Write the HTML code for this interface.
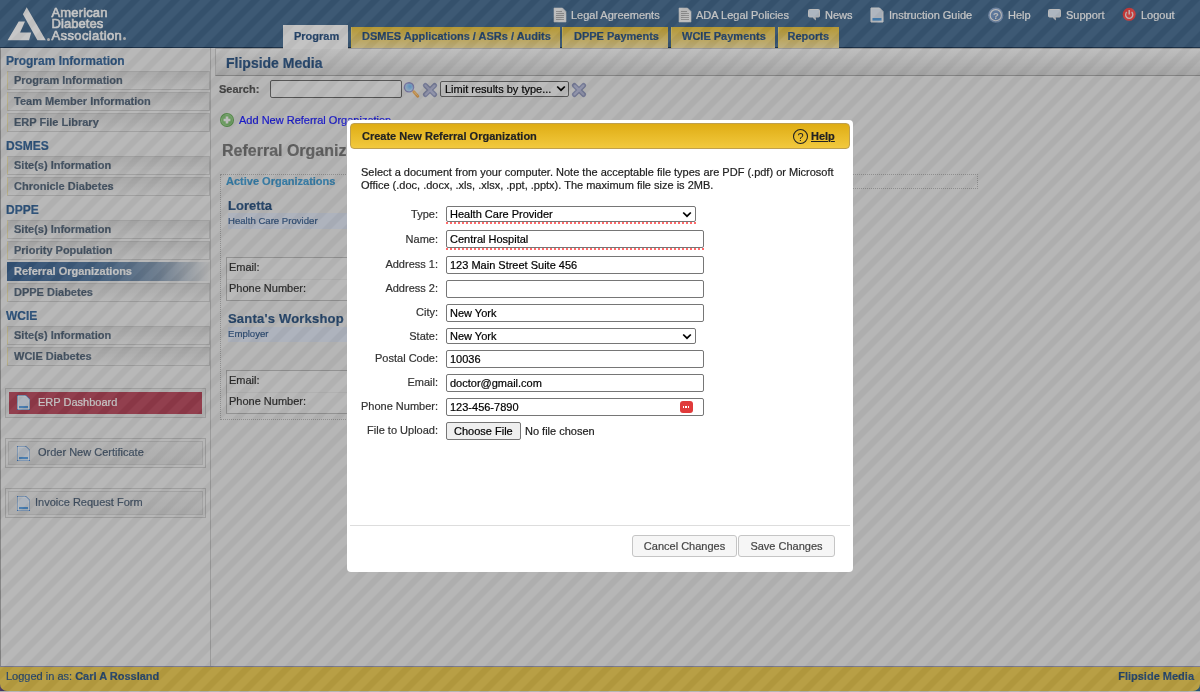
<!DOCTYPE html>
<html><head><meta charset="utf-8">
<style>
*{box-sizing:border-box;margin:0;padding:0}
html,body{width:1200px;height:692px;overflow:hidden}
body{font-family:"Liberation Sans",sans-serif;font-size:11px;background:#e8e8e8;position:relative;color:#333}
.abs{position:absolute}
.t{position:absolute;white-space:nowrap;line-height:1}
/* header */
#hdr{position:absolute;left:0;top:0;width:1200px;height:48px;background:#476c90;border-bottom:1px solid #1e3a58}
.nav{position:absolute;top:10px;color:#fff;font-size:11px;white-space:nowrap;line-height:11px}
.tab{position:absolute;top:27px;height:21px;background:linear-gradient(#e9c23e,#f3e0a0);border-left:1px solid #f7dc6e;color:#2d5585;font-weight:bold;font-size:11px;white-space:nowrap;line-height:11px;padding-top:4px}
/* sidebar */
#side{position:absolute;left:0;top:48px;width:211px;height:618px;background:#ebebeb;border-left:1px solid #a8a8a8;border-right:1px solid #c4c4c4}
.sh{position:absolute;left:5px;font-size:12px;font-weight:bold;color:#376699;line-height:12px;white-space:nowrap}
.si{position:absolute;left:6px;width:203px;height:19px;border:1px solid #cbcbcb;border-left:1px solid #eadfae;background:linear-gradient(#d8d8d8,#ebebeb);font-weight:bold;color:#55677b;font-size:11px;line-height:11px;padding:3px 0 0 6px;white-space:nowrap}
.si.act{background:linear-gradient(90deg,#3f6795 0%,#54789f 45%,#8ea2b8 76%,#e6e6e6 100%);background-origin:border-box;color:#fafafa;border-color:transparent}
/* main */
#title{position:absolute;left:215px;top:48px;width:985px;height:28px;background:linear-gradient(#f4f4f4,#d4d4d4);border-left:1px solid #c8c8c8;border-top:1px solid #c4c4c4;border-bottom:1px solid #a6a6a6}
#foot{position:absolute;left:0;top:666px;width:1200px;height:25px;background:#ebca52;border-top:1px solid #9a9ab4;border-radius:0 0 7px 7px}
#ov{position:absolute;left:0;top:0;width:1200px;height:692px;opacity:.25;z-index:10}
/* modal */
#modal{position:absolute;z-index:11;left:347px;top:120px;width:506px;height:452px;background:#fff;border-radius:4px}
#mt{position:absolute;left:3px;top:3px;width:500px;height:26px;border:1px solid #bfa050;border-radius:4px;background:linear-gradient(#dfad15,#f2c93e)}
.lbl{position:absolute;right:415px;font-size:11px;color:#333;white-space:nowrap;line-height:11px}
.inp{position:absolute;left:99px;width:258px;height:18px;border:1px solid #767676;border-radius:2px;background:#fff;font-size:11px;color:#000;line-height:11px;padding:3px 0 0 3px;white-space:nowrap}
.sel{width:250px;height:16px;padding-top:2px}
.dots{position:absolute;left:99px;height:2px;background:repeating-linear-gradient(90deg,#ff6a6a 0 2px,transparent 2px 4px)}
.btn{position:absolute;top:415px;height:22px;border:1px solid #c5c5c5;border-radius:3px;background:#f6f6f6;color:#454545;font-size:11px;line-height:11px;padding-top:5px;text-align:center;white-space:nowrap}
</style></head><body><div style="position:absolute;left:0;top:0;width:1200px;height:692px;will-change:transform;-webkit-text-stroke-width:0.2px">

<!-- HEADER -->
<div id="hdr">
  <svg class="abs" style="left:0;top:0" width="48" height="48" viewBox="0 0 48 48">
    <polygon fill="#fff" points="26.7,7.3 22.9,14.2 37.4,40.2 45.8,40.2"/>
    <polygon fill="#fff" points="7.6,40.2 18.7,21.5 25,21.5 20.1,32.6 31.2,32.6 29.1,40.2"/>
  </svg>
  <div class="t" style="left:51.5px;top:6.5px;color:#fff;font-weight:normal;font-size:13px;line-height:11.7px;-webkit-text-stroke:0.6px #fff"><span style="letter-spacing:.15px">American</span><br><span style="letter-spacing:.05px">Diabetes</span><br><span style="letter-spacing:.38px">Association</span></div>
  <div class="abs" style="left:47px;top:37.5px;width:3px;height:3px;border-radius:50%;background:#d8d8d8"></div>
  <div class="abs" style="left:122.5px;top:37px;width:3px;height:3px;border-radius:50%;background:#d8d8d8"></div>


  <svg class="abs" style="left:553px;top:7px" width="14" height="16" viewBox="0 0 14 16">
    <path d="M1 1 H9.5 L13 4.5 V15 H1 Z" fill="#f4f4f4" stroke="#e8e8e8" stroke-width="0.6"/>
    <path d="M3 4.5 H9 M3 6.5 H11 M3 8.5 H11 M3 10.5 H11 M3 12.5 H11" stroke="#b4b4b4" stroke-width="1"/>
  </svg>
  <svg class="abs" style="left:678px;top:7px" width="14" height="16" viewBox="0 0 14 16">
    <path d="M1 1 H9.5 L13 4.5 V15 H1 Z" fill="#f4f4f4" stroke="#e8e8e8" stroke-width="0.6"/>
    <path d="M3 4.5 H9 M3 6.5 H11 M3 8.5 H11 M3 10.5 H11 M3 12.5 H11" stroke="#b4b4b4" stroke-width="1"/>
  </svg>
  <svg class="abs" style="left:807px;top:8px" width="14" height="13" viewBox="0 0 14 13">
    <path d="M2.5 1.5 H11.5 Q12.5 1.5 12.5 2.5 V8 Q12.5 9 11.5 9 H8 L8.5 11.8 L5.5 9 H2.5 Q1.5 9 1.5 8 V2.5 Q1.5 1.5 2.5 1.5 Z" fill="#dde8f6" stroke="#f0f0f0" stroke-width="1"/>
  </svg>
  <svg class="abs" style="left:870px;top:7px" width="14" height="16" viewBox="0 0 14 16">
    <path d="M1 1 H9.5 L13 4.5 V15 H1 Z" fill="#dfe8f4" stroke="#f6f6f6" stroke-width="1"/>
    <rect x="2.5" y="11" width="9" height="2.6" fill="#5aa2e0"/>
  </svg>
  <svg class="abs" style="left:987px;top:7px" width="17" height="17" viewBox="0 0 17 17">
    <circle cx="8.8" cy="8.2" r="7.6" fill="#8aa6cc"/>
    <circle cx="8.8" cy="8.2" r="5.6" fill="#7396c4" stroke="#f2f2f2" stroke-width="1.1"/>
    <text x="8.8" y="11.8" text-anchor="middle" font-family="Liberation Sans" font-weight="bold" font-size="9.5" fill="#f4f4f4">?</text>
  </svg>
  <svg class="abs" style="left:1047px;top:8px" width="15" height="13" viewBox="0 0 15 13">
    <path d="M2.5 1.5 H12.5 Q13.5 1.5 13.5 2.5 V8 Q13.5 9 12.5 9 H8 L8.5 11.8 L5.5 9 H2.5 Q1.5 9 1.5 8 V2.5 Q1.5 1.5 2.5 1.5 Z" fill="#dde8f6" stroke="#f0f0f0" stroke-width="1"/>
  </svg>
  <svg class="abs" style="left:1122px;top:7px" width="15" height="15" viewBox="0 0 15 15">
    <circle cx="7.2" cy="7.3" r="6.5" fill="#ff4a4a"/>
    <path d="M4.8 5 A3.6 3.6 0 1 0 9.6 5" fill="none" stroke="#f8e0e0" stroke-width="1.3"/>
    <path d="M7.2 3 V7.5" stroke="#f8e0e0" stroke-width="1.5"/>
  </svg>
  <div class="nav" style="left:571px">Legal Agreements</div>
  <div class="nav" style="left:696px">ADA Legal Policies</div>
  <div class="nav" style="left:825px">News</div>
  <div class="nav" style="left:889px">Instruction Guide</div>
  <div class="nav" style="left:1008px">Help</div>
  <div class="nav" style="left:1066px">Support</div>
  <div class="nav" style="left:1141px">Logout</div>

  <div class="tab" style="left:283px;top:25px;height:24px;width:65px;background:#fafafa;border:none;z-index:5;padding:6px 0 0 11px;color:#2d5585">Program</div>
  <div class="tab" style="left:351px;width:209px;padding-left:10px">DSMES Applications / ASRs / Audits</div>
  <div class="tab" style="left:562px;width:106px;padding-left:11px">DPPE Payments</div>
  <div class="tab" style="left:671px;width:104px;padding-left:10px">WCIE Payments</div>
  <div class="tab" style="left:778px;width:61px;padding-left:8.5px">Reports</div>
</div>

<!-- SIDEBAR -->
<div id="side">
  <div class="sh" style="top:7px">Program Information</div>
  <div class="si" style="top:23px">Program Information</div>
  <div class="si" style="top:44px">Team Member Information</div>
  <div class="si" style="top:65px">ERP File Library</div>
  <div class="sh" style="top:92px">DSMES</div>
  <div class="si" style="top:108px">Site(s) Information</div>
  <div class="si" style="top:129px">Chronicle Diabetes</div>
  <div class="sh" style="top:156px">DPPE</div>
  <div class="si" style="top:172px">Site(s) Information</div>
  <div class="si" style="top:193px">Priority Population</div>
  <div class="si act" style="top:214px">Referral Organizations</div>
  <div class="si" style="top:235px">DPPE Diabetes</div>
  <div class="sh" style="top:262px">WCIE</div>
  <div class="si" style="top:278px">Site(s) Information</div>
  <div class="si" style="top:299px">WCIE Diabetes</div>
</div>

<!-- MAIN -->
<div id="title"><div class="t" style="left:10px;top:7px;font-size:14px;font-weight:bold;color:#305887">Flipside Media</div></div>


<!-- MAIN CONTENT -->
<div class="t" style="left:219px;top:84px;font-weight:bold;color:#555">Search:</div>
<div class="abs" style="left:270px;top:80px;width:132px;height:18px;border:1px solid #6a6a6a;border-radius:2px;background:#f0f0f0"></div>
<svg class="abs" style="left:402px;top:80px" width="20" height="20" viewBox="0 0 20 20">
  <defs><radialGradient id="lens" cx="0.6" cy="0.4" r="0.7"><stop offset="0" stop-color="#7cc0ff"/><stop offset="1" stop-color="#d8ecf8"/></radialGradient></defs>
  <line x1="11.8" y1="11.8" x2="15.8" y2="16.2" stroke="#f2ae5a" stroke-width="2.9" stroke-linecap="round"/><line x1="12.2" y1="11.8" x2="15.6" y2="15.6" stroke="#ffd890" stroke-width="0.8" stroke-linecap="round"/>
  <circle cx="7" cy="7.3" r="4.6" fill="url(#lens)" stroke="#9494cc" stroke-width="1.4"/>
</svg>
<svg class="abs" style="left:422px;top:82px" width="16" height="16" viewBox="0 0 16 16"><path d="M3.4 3.4 L12.6 12.6 M12.6 3.4 L3.4 12.6" stroke="#9299bd" stroke-width="4.9" stroke-linecap="round"/><path d="M3.6 3.6 L12.4 12.4 M12.4 3.6 L3.6 12.4" stroke="#b6bad8" stroke-width="2.2" stroke-linecap="round"/></svg>
<div class="abs" style="left:440px;top:81px;width:129px;height:16px;border:1px solid #6a6a6a;border-radius:2px;background:#f0f0f0"></div>
<div class="t" style="left:445px;top:84px;color:#000">Limit results by type...</div>
<svg class="abs" style="left:556px;top:85px" width="10" height="7" viewBox="0 0 10 7"><path d="M1.2 1.5 L5 5.2 L8.8 1.5" fill="none" stroke="#000" stroke-width="1.7"/></svg>
<svg class="abs" style="left:571px;top:82px" width="16" height="16" viewBox="0 0 16 16"><path d="M3.4 3.4 L12.6 12.6 M12.6 3.4 L3.4 12.6" stroke="#9299bd" stroke-width="4.9" stroke-linecap="round"/><path d="M3.6 3.6 L12.4 12.4 M12.4 3.6 L3.6 12.4" stroke="#b6bad8" stroke-width="2.2" stroke-linecap="round"/></svg>

<svg class="abs" style="left:219px;top:112px" width="16" height="16" viewBox="0 0 16 16">
  <circle cx="8" cy="8" r="7" fill="#6aae5c"/>
  <circle cx="8" cy="8" r="5.6" fill="#84c476" stroke="#a6d898" stroke-width="0.7"/>
  <path d="M8 4.6 V11.4 M4.6 8 H11.4" stroke="#f2f2f2" stroke-width="2.6"/>
</svg>
<div class="t" style="left:239px;top:115px;color:#1a1aff">Add New Referral Organization</div>

<div class="t" style="left:222px;top:142.5px;font-size:16px;font-weight:bold;color:#787878">Referral Organizations</div>

<div class="abs" style="left:220px;top:174px;width:758px;height:15px;border-top:1px dotted #b4b4b4;border-right:1px dotted #b4b4b4"></div><div class="abs" style="left:600px;top:188px;width:378px;height:1px;border-top:1px dotted #b4b4b4"></div>
<div class="abs" style="left:220px;top:174px;width:620px;height:246px;border-left:1px dotted #b4b4b4;border-bottom:1px dotted #b4b4b4"></div>
<div class="t" style="left:226px;top:176px;font-size:11px;font-weight:bold;color:#429bd0">Active Organizations</div>

<div class="t" style="left:228px;top:199px;font-size:13px;font-weight:bold;color:#2f5683">Loretta</div>
<div class="abs" style="left:228px;top:213px;width:600px;height:16px;background:#dee4f2"></div>
<div class="t" style="left:228px;top:216px;font-size:9.6px;color:#3a6090">Health Care Provider</div>
<div class="abs" style="left:226px;top:257px;width:600px;height:44px;border:1px solid #b8b8b8;background:#ececec"></div>
<div class="abs" style="left:227px;top:279px;width:598px;height:1px;background:#e2e2e2"></div>
<div class="t" style="left:229px;top:262px;color:#333">Email:</div>
<div class="t" style="left:229px;top:283px;color:#333">Phone Number:</div>

<div class="t" style="left:228px;top:312px;font-size:13px;font-weight:bold;color:#2f5683;letter-spacing:.2px">Santa's Workshop</div>
<div class="abs" style="left:228px;top:327px;width:600px;height:15px;background:#dee4f2"></div>
<div class="t" style="left:228px;top:329px;font-size:9.6px;color:#3a6090">Employer</div>
<div class="abs" style="left:226px;top:370px;width:600px;height:44px;border:1px solid #b8b8b8;background:#ececec"></div>
<div class="abs" style="left:227px;top:392px;width:598px;height:1px;background:#e2e2e2"></div>
<div class="t" style="left:229px;top:375px;color:#333">Email:</div>
<div class="t" style="left:229px;top:396px;color:#333">Phone Number:</div>

<!-- dashboard buttons -->
<div class="abs" style="left:5px;top:388px;width:201px;height:30px;border:1px solid #c8c8c8;background:#e4e4e4"></div>
<div class="abs" style="left:9px;top:392px;width:193px;height:22px;background:#b84a5e"></div>
<svg class="abs" style="left:16px;top:394px" width="15" height="17" viewBox="0 0 15 17"><path d="M1 1 H10 L14 5 V16 H1 Z" fill="#4a86d0"/><path d="M2 2 H9.5 L13 5.5 V15 H2 Z" fill="#dce6f2" stroke="#fafafa" stroke-width="1"/><rect x="3" y="12" width="9" height="2.2" fill="#5a9ee0"/></svg>
<div class="t" style="left:38px;top:397px;font-size:11px;color:#fff">ERP Dashboard</div>
<div class="abs" style="left:5px;top:438px;width:201px;height:30px;border:1px solid #c8c8c8;background:#eaeaea"></div>
<div class="abs" style="left:8px;top:441px;width:195px;height:24px;border:1px solid #cfcfcf;background:linear-gradient(#e6e6e6,#dcdcdc)"></div>
<svg class="abs" style="left:16px;top:445px" width="15" height="17" viewBox="0 0 15 17"><path d="M1 1 H10 L14 5 V16 H1 Z" fill="#4a86d0"/><path d="M2 2 H9.5 L13 5.5 V15 H2 Z" fill="#dce6f2" stroke="#fafafa" stroke-width="1"/><rect x="3" y="12" width="9" height="2.2" fill="#5a9ee0"/></svg>
<div class="t" style="left:38px;top:447px;font-size:11px;color:#4f6278">Order New Certificate</div>
<div class="abs" style="left:5px;top:488px;width:201px;height:30px;border:1px solid #c8c8c8;background:#eaeaea"></div>
<div class="abs" style="left:8px;top:491px;width:195px;height:24px;border:1px solid #cfcfcf;background:linear-gradient(#e6e6e6,#dcdcdc)"></div>
<svg class="abs" style="left:16px;top:495px" width="15" height="17" viewBox="0 0 15 17"><path d="M1 1 H10 L14 5 V16 H1 Z" fill="#4a86d0"/><path d="M2 2 H9.5 L13 5.5 V15 H2 Z" fill="#dce6f2" stroke="#fafafa" stroke-width="1"/><rect x="3" y="12" width="9" height="2.2" fill="#5a9ee0"/></svg>
<div class="t" style="left:35px;top:497px;font-size:11px;color:#4f6278">Invoice Request Form</div>
<div class="abs" style="left:0;top:682px;width:8px;height:9px;background:#5a4a80"></div><div class="abs" style="left:1192px;top:682px;width:8px;height:9px;background:#2a6490"></div>
<div id="foot">
  <div class="t" style="left:6px;top:4px;color:#305887;font-size:11px">Logged in as: <b>Carl A Rossland</b></div>
  <div class="t" style="right:6px;top:4px;color:#305887;font-size:11px;font-weight:bold">Flipside Media</div>
</div>

<!-- OVERLAY -->
<svg id="ov" width="1200" height="692">
  <defs><pattern id="st" width="20" height="20" patternUnits="userSpaceOnUse">
    <rect width="20" height="20" fill="#232323"/>
    <polygon fill="#000" points="11,0 20,0 20,0 0,20 0,11"/>
    <polygon fill="#000" points="20,11 20,20 11,20"/>
  </pattern></defs>
  <rect width="1200" height="692" fill="url(#st)"/>
</svg>

<!-- MODAL -->
<div id="modal">
  <div id="mt">
    <div class="t" style="left:11px;top:7px;font-size:11px;font-weight:bold;color:#222">Create New Referral Organization</div>
    <svg class="abs" style="left:441px;top:4px" width="17" height="17" viewBox="0 0 17 17"><circle cx="8.5" cy="8.5" r="7" fill="none" stroke="#222" stroke-width="1.1"/><text x="8.5" y="12.5" text-anchor="middle" font-family="Liberation Sans" font-size="11" fill="#222">?</text></svg>
    <div class="t" style="left:460px;top:7px;font-size:11px;font-weight:bold;color:#222;text-decoration:underline">Help</div>
  </div>

  <div class="t" style="left:14px;top:46px;line-height:13px;color:#222">Select a document from your computer. Note the acceptable file types are PDF (.pdf) or Microsoft<br>Office (.doc, .docx, .xls, .xlsx, .ppt, .pptx). The maximum file size is 2MB.</div>

  <div class="lbl" style="top:89px">Type:</div>
  <div class="inp sel" style="top:86px">Health Care Provider</div>
  <div class="dots" style="top:102px;width:250px"></div>
  <div class="lbl" style="top:114px">Name:</div>
  <div class="inp" style="top:110px">Central Hospital</div>
  <div class="dots" style="top:128px;width:258px"></div>
  <div class="lbl" style="top:139px">Address 1:</div>
  <div class="inp" style="top:136px">123 Main Street Suite 456</div>
  <div class="lbl" style="top:163px">Address 2:</div>
  <div class="inp" style="top:160px"></div>
  <div class="lbl" style="top:187px">City:</div>
  <div class="inp" style="top:184px">New York</div>
  <div class="lbl" style="top:211px">State:</div>
  <div class="inp sel" style="top:208px">New York</div>
  <div class="lbl" style="top:233px">Postal Code:</div>
  <div class="inp" style="top:230px">10036</div>
  <div class="lbl" style="top:257px">Email:</div>
  <div class="inp" style="top:254px">doctor@gmail.com</div>
  <div class="lbl" style="top:281px">Phone Number:</div>
  <div class="inp" style="top:278px">123-456-7890</div>
  <div class="abs" style="left:333px;top:281px;width:13px;height:12px;border-radius:3px;background:#e03a3a"></div>
  <div class="abs" style="left:336px;top:286px;width:7px;height:2px;background:repeating-linear-gradient(90deg,#fff 0 1.5px,transparent 1.5px 2.5px)"></div>
  <div class="lbl" style="top:305px">File to Upload:</div>
  <div class="abs" style="left:99px;top:302px;width:75px;height:18px;border:1px solid #767676;border-radius:2px;background:#efefef"></div>
  <div class="t" style="left:107px;top:306px;color:#000">Choose File</div>
  <div class="t" style="left:178px;top:306px;color:#222">No file chosen</div>

  <svg class="abs" style="left:335px;top:91px" width="10" height="7" viewBox="0 0 10 7"><path d="M1.2 1.5 L5 5.2 L8.8 1.5" fill="none" stroke="#000" stroke-width="1.7"/></svg>
  <svg class="abs" style="left:335px;top:213px" width="10" height="7" viewBox="0 0 10 7"><path d="M1.2 1.5 L5 5.2 L8.8 1.5" fill="none" stroke="#000" stroke-width="1.7"/></svg>

  <div class="abs" style="left:3px;top:405px;width:500px;height:1px;background:#dddddd"></div>
  <div class="btn" style="left:285px;width:105px">Cancel Changes</div>
  <div class="btn" style="left:391px;width:97px">Save Changes</div>
</div>

</div></body></html>
